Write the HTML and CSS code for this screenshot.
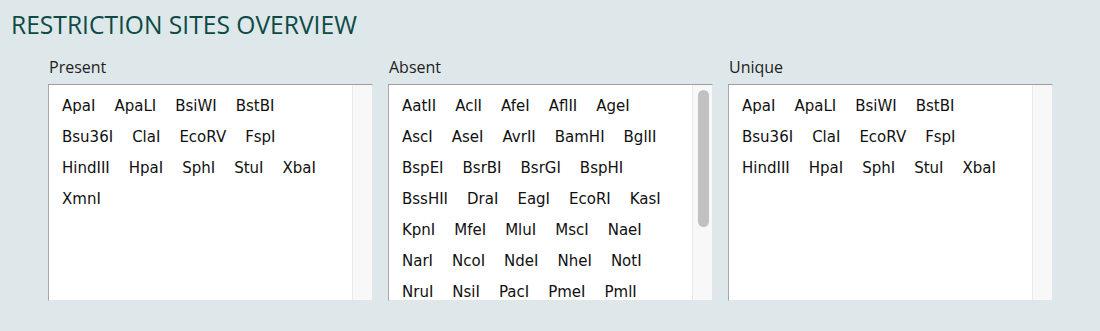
FILE: index.html
```html
<!DOCTYPE html>
<html lang="en">
  <head>
    <meta charset="UTF-8" />
    <meta name="viewport" content="width=device-width, initial-scale=1.0" />
    <title>Restriction Sites Overview</title>
    <link rel="stylesheet" href="styles.css">
  </head>
  <body>
    <h1 class="title">RESTRICTION SITES OVERVIEW</h1>

    <div class="panels">
        <div class="panel">
            <h3 class="panel-label">Present</h3>
            <div class="list-box">
                <div class="list">
                    <div class="row"><span>ApaI</span><span>ApaLI</span><span>BsiWI</span><span>BstBI</span></div>
                    <div class="row"><span>Bsu36I</span><span>ClaI</span><span>EcoRV</span><span>FspI</span></div>
                    <div class="row"><span>HindIII</span><span>HpaI</span><span>SphI</span><span>StuI</span><span>XbaI</span></div>
                    <div class="row"><span>XmnI</span></div>
                </div>
                <div class="track"></div>
            </div>
        </div>

        <div class="panel">
            <h3 class="panel-label">Absent</h3>
            <div class="list-box">
                <div class="list">
                    <div class="row"><span>AatII</span><span>AclI</span><span>AfeI</span><span>AflII</span><span>AgeI</span></div>
                    <div class="row"><span>AscI</span><span>AseI</span><span>AvrII</span><span>BamHI</span><span>BglII</span></div>
                    <div class="row"><span>BspEI</span><span>BsrBI</span><span>BsrGI</span><span>BspHI</span></div>
                    <div class="row"><span>BssHII</span><span>DraI</span><span>EagI</span><span>EcoRI</span><span>KasI</span></div>
                    <div class="row"><span>KpnI</span><span>MfeI</span><span>MluI</span><span>MscI</span><span>NaeI</span></div>
                    <div class="row"><span>NarI</span><span>NcoI</span><span>NdeI</span><span>NheI</span><span>NotI</span></div>
                    <div class="row"><span>NruI</span><span>NsiI</span><span>PacI</span><span>PmeI</span><span>PmlI</span></div>
                </div>
                <div class="track">
                    <div class="thumb"></div>
                </div>
            </div>
        </div>

        <div class="panel">
            <h3 class="panel-label">Unique</h3>
            <div class="list-box">
                <div class="list">
                    <div class="row"><span>ApaI</span><span>ApaLI</span><span>BsiWI</span><span>BstBI</span></div>
                    <div class="row"><span>Bsu36I</span><span>ClaI</span><span>EcoRV</span><span>FspI</span></div>
                    <div class="row"><span>HindIII</span><span>HpaI</span><span>SphI</span><span>StuI</span><span>XbaI</span></div>
                </div>
                <div class="track"></div>
            </div>
        </div>
    </div>
  </body>
</html>
```

FILE: styles.css
```css
* {
  margin: 0;
  padding: 0;
  box-sizing: border-box;
}

body {
  width: 1100px;
  height: 331px;
  background: #dee7ea;
  font-family: "Open Sans", "Noto Sans", sans-serif;
  overflow: hidden;
}

.title {
  font-size: 24.6px;
  font-weight: 400;
  line-height: 30px;
  color: #0d4a45;
  padding: 10px 0 0 11px;
}

.panels {
  display: grid;
  grid-template-columns: repeat(3, 1fr);
  gap: 15px;
  padding: 0 47px 0 48px;
  margin-top: 17px;
}

.panel-label {
  font-size: 16px;
  font-weight: 400;
  line-height: 20px;
  color: #1e1e1e;
  padding-left: 1px;
  margin-bottom: 7px;
}

.list-box {
  display: flex;
  height: 217px;
  background: #fff;
  border-top: 1px solid #9d9d9d;
  border-left: 1px solid #a8a8a8;
  border-bottom: 1px solid #e4e4e4;
  border-right: 1px solid #e4e4e4;
  overflow: hidden;
}

.list {
  flex: 1;
  padding: 6px 0 0 13px;
  font-family: Tahoma, "DejaVu Sans", sans-serif;
  font-size: 15px;
  line-height: 31px;
  color: #111;
}

.row {
  display: flex;
  gap: 19px;
  white-space: nowrap;
}

.track {
  width: 20px;
  background: #f8f8f8;
  border-left: 1px solid #e9e9e9;
  padding: 5px 3px 0 5px;
}

.thumb {
  height: 137px;
  background: #c1c1c1;
  border-radius: 6px;
}
```
